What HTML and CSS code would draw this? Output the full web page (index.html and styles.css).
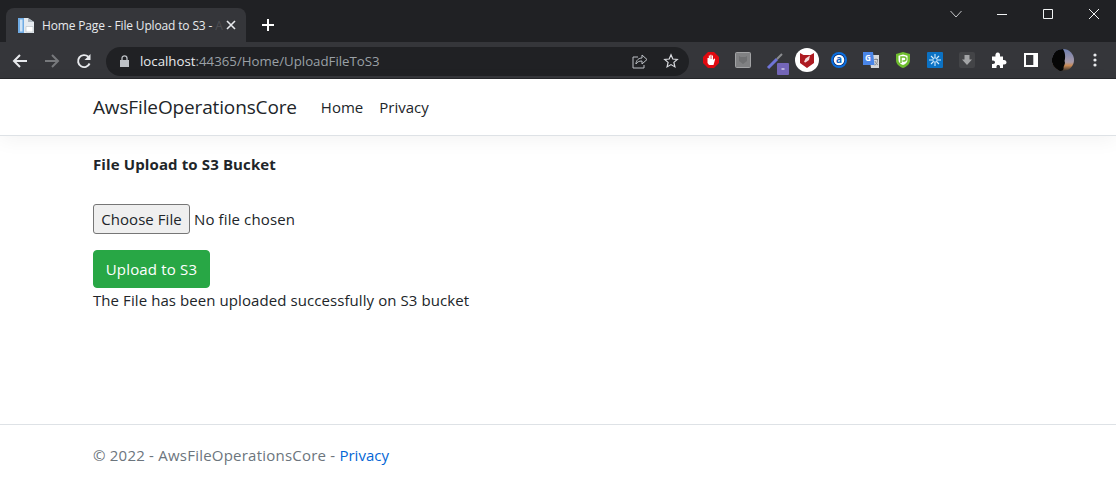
FILE: index.html
```
<!DOCTYPE html>
<html lang="en">
<head>
<meta charset="utf-8">
<title>Home Page - File Upload to S3 - AwsFileOperationsCore</title>
<link rel="stylesheet" href="styles.css">
</head>
<body>
<div class="chrome">
  <div class="tabstrip">
    <div class="tab">
      <svg class="favicon" viewBox="0 0 16 16" width="16" height="16"><path d="M0 1h10l6 4v11H0z" fill="#e6ebf0"/><path d="M0 1h6v15H0z" fill="#6fabe4"/><path d="M2 2.500h2.500v12H2z" fill="#cfe3f6"/><path d="M8 9.500h7V15H8z" fill="#fff" stroke="#b4bcc4" stroke-width=".6"/><path d="M10 1l6 4h-6z" fill="#aeb8c1"/></svg>
      <span class="tab-title">Home Page - File Upload to S3 - <span class="tab-fade">A</span></span>
      <svg class="tab-close" viewBox="0 0 10 10" width="10" height="10"><path d="M1 1l8 8M9 1L1 9" stroke="#e8eaed" stroke-width="1.600"/></svg>
    </div>
    <svg class="new-tab" viewBox="0 0 12 12" width="12" height="12"><path d="M6 0v12M0 6h12" stroke="#fff" stroke-width="2"/></svg>
    <div class="window-controls">
      <svg viewBox="0 0 12 8" width="12" height="8"><path d="M.5 1L6 7l5.500-6" fill="none" stroke="#c4c6c9" stroke-width="1"/></svg>
      <svg viewBox="0 0 10 10" width="10" height="10"><path d="M0 5.500h10" stroke="#f1f3f4" stroke-width="1"/></svg>
      <svg viewBox="0 0 10 10" width="10" height="10"><path d="M.5.500h9v9h-9z" fill="none" stroke="#f1f3f4" stroke-width="1"/></svg>
      <svg viewBox="0 0 10 10" width="10" height="10"><path d="M0 0l10 10M10 0L0 10" stroke="#f1f3f4" stroke-width="1"/></svg>
    </div>
  </div>
  <div class="toolbar">
    <div class="nav-buttons">
      <svg viewBox="0 0 16 16" width="16" height="16"><path d="M15 8H2M8 2L2 8l6 6" fill="none" stroke="#e8eaed" stroke-width="2"/></svg>
      <svg viewBox="0 0 16 16" width="16" height="16"><path d="M1 8h13M8 2l6 6-6 6" fill="none" stroke="#77797c" stroke-width="2"/></svg>
      <svg viewBox="0 0 16 16" width="16" height="16"><path d="M13.600 10.500A6 6 0 1 1 12.300 3.800" fill="none" stroke="#e8eaed" stroke-width="1.900"/><path d="M14.500 1v6h-6z" fill="#e8eaed"/></svg>
    </div>
    <div class="omnibox">
      <svg class="lock" viewBox="0 0 9 12" width="9" height="12"><path d="M0 5h9v7H0z" fill="#bdc1c6"/><path d="M2 5V3.300a2.500 2.500 0 0 1 5 0V5" fill="none" stroke="#bdc1c6" stroke-width="1.300"/></svg>
      <span class="url"><span class="url-host">localhost</span>:44365/Home/UploadFileToS3</span>
      <svg class="omni-icon" viewBox="0 0 16 16" width="16" height="16"><path d="M6 4H1v11h11v-3" fill="none" stroke="#bdc1c6" stroke-width="1"/><path d="M4 11c0-4 3-6 6-6V2l5 4.500L10 11V8c-3 0-5 1-6 3z" fill="none" stroke="#bdc1c6" stroke-width="1"/></svg>
      <svg class="omni-icon omni-star" viewBox="0 0 16 16" width="16" height="16"><path d="M8 1.800l1.800 4.200 4.500.4-3.400 3 1 4.500L8 11.600l-3.900 2.300 1-4.500-3.400-3 4.500-.4z" fill="none" stroke="#dadce0" stroke-width="1.200"/></svg>
    </div>
    <div class="extensions">
      <span class="ext"><svg viewBox="0 0 16 16" width="16" height="16"><path d="M5 0h6l5 5v6l-5 5H5l-5-5V5z" fill="#e0090f"/><path d="M4.500 11V6h1.300V3.500h1.100V7h.4V2.800h1.200V7h.4V3.500h1.100V8l1.300-1.500.9.600L10.500 13H6z" fill="#fff"/></svg></span>
      <span class="ext"><svg viewBox="0 0 16 16" width="16" height="16"><rect x=".5" y=".5" width="15" height="15" rx="1" fill="#808183" stroke="#a2a3a5"/><path d="M4 4l1.500 1h5L12 4v5l-4 3-4-3z" fill="#6f7072"/></svg></span>
      <span class="ext ext-wide"><svg viewBox="0 0 32 28" width="32" height="28"><path d="M9 21L18 12" stroke="#6f74d8" stroke-width="3"/><path d="M18 12l5-5" stroke="#8b8d90" stroke-width="2"/><rect x="18" y="16" width="12" height="12" rx="1" fill="#7466b8"/><rect x="22.500" y="21.500" width="3" height="1" fill="#fff"/></svg></span>
      <span class="ext"><svg viewBox="0 0 24 24" width="24" height="24"><circle cx="12" cy="12" r="12" fill="#fff"/><path d="M5 5l3.500 2h7L19 5v10l-7 5-7-5z" fill="#ad1a21"/><path d="M9 14l1.500-3.500L15 7.500l-1 4.500-3.500 2.500z" fill="#f3d9d9"/></svg></span>
      <span class="ext"><svg viewBox="0 0 16 16" width="16" height="16"><circle cx="8" cy="8" r="8" fill="#0b6fe0"/><circle cx="8" cy="8" r="6.100" fill="#0a2a6a"/><circle cx="8" cy="8" r="5.300" fill="#fff"/><text class="ext-letter" x="8" y="11.300" text-anchor="middle">a</text></svg></span>
      <span class="ext"><svg viewBox="0 0 16 16" width="16" height="16"><path d="M6 3h10v13H8z" fill="#d5d7da"/><path d="M0 0h10l1.500 13H0z" fill="#4a86e8"/><text class="ext-g" x="5" y="9" text-anchor="middle">G</text><path d="M11 7.500h4M13 6.500v1M11.500 13c2 0 3-2 3-5.500M12 9c.5 2 2 3.500 3 4" fill="none" stroke="#6c6f73" stroke-width=".7"/></svg></span>
      <span class="ext"><svg viewBox="0 0 16 16" width="16" height="16"><path d="M8 0l7 2v6c0 4-3 6.500-7 8-4-1.500-7-4-7-8V2z" fill="#6fbe2e"/><path d="M8 2.500l4.500 1.300V8c0 2.500-2 4-4.500 5-2.500-1-4.500-2.500-4.500-5V3.800z" fill="#fff"/><path d="M6 11V5h3a2 2 0 0 1 0 4H7.500" fill="none" stroke="#6fbe2e" stroke-width="1.500"/></svg></span>
      <span class="ext"><svg viewBox="0 0 16 16" width="16" height="16"><rect width="16" height="16" rx="1" fill="#0b72c4"/><path d="M8 2v12M2 8h12M4 4l8 8M12 4l-8 8" stroke="#d6ecfb" stroke-width="1.100"/><circle cx="8" cy="8" r="2" fill="#0b72c4" stroke="#d6ecfb" stroke-width=".6"/></svg></span>
      <span class="ext"><svg viewBox="0 0 16 16" width="16" height="16"><rect width="16" height="16" rx="2" fill="#434447"/><path d="M5.500 3h5v4.500H13L8 13 3 7.500h2.500z" fill="#a3a4a6"/></svg></span>
      <span class="ext"><svg viewBox="0 0 16 16" width="16" height="16"><path d="M1 4.500h3.500C4 1 6 .5 6.800.5S9.500 1 9 4.500h3V8c3-.5 3.500 1.500 3.500 2.300S15 13 12 12.500V16H9c.5-2.500-1-3-1.800-3S5 13.500 5.500 16H1v-4c2.500.5 3-1 3-1.700S3.500 8 1 8.500z" fill="#fff"/></svg></span>
      <span class="ext"><svg viewBox="0 0 14 14" width="14" height="14"><path d="M0 0h14v14H0z" fill="#fff"/><path d="M2 2h7.300v10H2z" fill="#35363a"/></svg></span>
      <span class="ext"><svg viewBox="0 0 22 22" width="22" height="22"><defs><linearGradient id="sky" x1="0" y1="0" x2="0" y2="1"><stop offset="0" stop-color="#6f7fb0"/><stop offset=".6" stop-color="#a89aa8"/><stop offset=".75" stop-color="#c98a55"/><stop offset="1" stop-color="#33302f"/></linearGradient></defs><circle cx="11" cy="11" r="11" fill="url(#sky)"/><path d="M11 0A11 11 0 0 0 4 19.500L8 22c3 0 4-2 3.500-4 1-2 2-4 1-6 1-3 1-8-1.500-12z" fill="#060606"/></svg></span>
      <span class="ext"><svg viewBox="0 0 4 14" width="4" height="14"><circle cx="2" cy="2" r="1.600" fill="#e8eaed"/><circle cx="2" cy="7" r="1.600" fill="#e8eaed"/><circle cx="2" cy="12" r="1.600" fill="#e8eaed"/></svg></span>
    </div>
  </div>
</div>
<header class="navbar">
  <a class="brand" href="#">AwsFileOperationsCore</a>
  <nav class="nav-links">
    <a href="#">Home</a>
    <a href="#">Privacy</a>
  </nav>
</header>
<main class="content">
  <h1 class="heading">File Upload to S3 Bucket</h1>
  <div class="file-row">
    <input class="file-input" type="file">
  </div>
  <button class="upload-btn" type="button">Upload to S3</button>
  <p class="status">The File has been uploaded successfully on S3 bucket</p>
</main>
<footer class="footer">© 2022 - AwsFileOperationsCore - <a href="#">Privacy</a></footer>
</body>
</html>
```
FILE: styles.css
```
* { box-sizing: border-box; }
html, body { margin: 0; height: 100%; overflow: hidden; }
body {
  display: flex;
  flex-direction: column;
  background: #fff;
  color: #212529;
  font-family: "Open Sans", "Noto Sans", sans-serif;
  font-size: 15px;
  letter-spacing: .12px;
}
a { text-decoration: none; }

.chrome { flex: none; background: #35363a; border-bottom: 1px solid #26272a; letter-spacing: 0; }
.tabstrip {
  height: 42px;
  background: #202124;
  display: flex;
  align-items: flex-end;
  padding-left: 6px;
}
.tab {
  width: 240px;
  height: 34px;
  background: #35363a;
  border-radius: 8px 8px 0 0;
  display: flex;
  align-items: center;
  padding: 0 11px 0 12px;
  gap: 8px;
  font-size: 12px;
  letter-spacing: -.15px;
  color: #e8eaed;
}
.favicon { flex: none; }
.tab-title { flex: 1; min-width: 0; white-space: nowrap; }
.tab-fade { color: #4d4e52; }
.tab-close { flex: none; margin-right: -1px; }
.new-tab { margin: 0 0 11px 16px; }
.window-controls {
  margin-left: auto;
  margin-right: -1px;
  align-self: flex-start;
  display: grid;
  grid-template-columns: repeat(4, 46px);
  justify-items: center;
  align-items: center;
  height: 26px;
  margin-top: 1px;
}

.toolbar {
  height: 36px;
  display: flex;
  align-items: center;
  padding-top: 1px;
}
.nav-buttons {
  display: grid;
  grid-template-columns: repeat(3, 32px);
  justify-items: center;
  width: 106px;
  padding-left: 4px;
}
.omnibox {
  width: 583px;
  height: 29px;
  margin-top: 1px;
  background: #202124;
  border-radius: 15px;
  display: flex;
  align-items: center;
  padding: 0 10px 0 14px;
  color: #9aa0a6;
  font-size: 13.25px;
}
.lock { flex: none; margin-right: 11px; }
.url { flex: 1; white-space: nowrap; }
.url-host { color: #e8eaed; }
.omni-icon { flex: none; margin-left: 16px; }
.omni-star { margin-left: 15px; }
.extensions {
  display: grid;
  grid-template-columns: repeat(13, 32px);
  margin: -1px 0 0 6px;
  align-items: center;
}
.ext { display: flex; justify-content: center; align-items: center; height: 24px; }
.ext-wide svg { flex: none; margin-top: 2px; }
.ext-letter { font: 700 10px "Open Sans", sans-serif; fill: #0b5fc0; }
.ext-g { font: 700 8px "Open Sans", sans-serif; fill: #fff; }

.navbar {
  flex: none;
  height: 57px;
  padding: 0 93px;
  display: flex;
  align-items: center;
  border-bottom: 1px solid #dee2e6;
  box-shadow: 0 4px 20px rgba(0, 0, 0, .05);
}
.brand { font-size: 19px; letter-spacing: -.14px; color: #212529; margin-right: 24px; }
.nav-links { display: flex; gap: 16px; }
.nav-links a { color: #212529; font-size: 15px; letter-spacing: 0; }

.content { flex: 1; padding: 0 93px; }
.heading { margin: 18px 0 0; font-size: 15px; font-weight: 700; line-height: 20px; }
.file-row { margin-top: 30px; height: 30px; }
.file-input { font: inherit; letter-spacing: inherit; color: #212529; height: 30px; display: block; }
.file-input::file-selector-button {
  font: inherit;
  letter-spacing: .05px;
  height: 30px;
  width: 97px;
  padding: 0;
  margin-right: 4px;
  background: #efefef;
  border: 1px solid #767676;
  border-radius: 3px;
  color: #212529;
}
.upload-btn {
  display: block;
  margin-top: 16px;
  width: 117px;
  height: 38px;
  padding: 0;
  background: #28a745;
  border: 1px solid #28a745;
  border-radius: 4px;
  color: #fff;
  font: inherit;
  letter-spacing: .17px;
}
.status { margin: 1px 0 0; line-height: 22px; letter-spacing: .08px; }

.footer {
  flex: none;
  height: 60px;
  padding: 19px 93px 0;
  border-top: 1px solid #dee2e6;
  color: #6c757d;
  line-height: 22px;
  letter-spacing: .22px;
}
.footer a { color: #0366d6; letter-spacing: 0; }
```
